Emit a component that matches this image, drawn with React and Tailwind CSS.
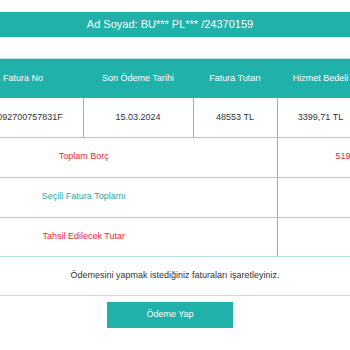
import React from 'react'

const teal = 'bg-[#20b2aa]'

export default function App() {
  const cols = [72, 120, 110, 84, 87, 80]

  return (
    <div className="w-[350px] h-[350px] overflow-hidden bg-white font-['Liberation_Sans',Arial,sans-serif] text-[9px] text-[#333]">
      {/* Title bar */}
      <div className="pt-3">
        <div className={`h-[25px] ${teal} flex items-center justify-center pr-[10px] text-white text-[11px]`}>
          Ad Soyad: BU*** PL*** /24370159
        </div>
      </div>

      {/* Invoice table */}
      <div className="mt-[21px] border-t border-[#b5e4e0] overflow-hidden">
        <table className="ml-[-109px] w-[553px] table-fixed border-collapse">
          <colgroup>
            {cols.map((w, i) => (
              <col key={i} style={{ width: w }} />
            ))}
          </colgroup>
          <thead>
            <tr className={`${teal} h-[39px] text-white`}>
              <th className="font-normal"></th>
              <th className="font-normal">Fatura No</th>
              <th className="font-normal">Son Ödeme Tarihi</th>
              <th className="font-normal">Fatura Tutarı</th>
              <th className="font-normal">Hizmet Bedeli</th>
              <th className="font-normal">Toplam</th>
            </tr>
          </thead>
          <tbody>
            <tr className="h-[39px] border-b border-[#8fd2cc] text-center">
              <td className="border-r border-[#6fc5bd]"></td>
              <td className="border-r border-[#6fc5bd] pl-[14px]">092700757831F</td>
              <td className="border-r border-[#6fc5bd]">15.03.2024</td>
              <td className="border-r border-[#6fc5bd]">48553 TL</td>
              <td className="border-r border-[#6fc5bd]">3399,71 TL</td>
              <td></td>
            </tr>
            <tr className="h-[40px] border-b border-[#8fd2cc] text-center">
              <td colSpan={4} className="border-r border-[#6fc5bd] text-[#e52b35]">Toplam Borç</td>
              <td colSpan={2} className="text-[#e52b35]">51952,71 TL</td>
            </tr>
            <tr className="h-[40px] border-b border-[#8fd2cc] text-center">
              <td colSpan={4} className="border-r border-[#6fc5bd] text-[#2ea79f]">Seçili Fatura Toplamı</td>
              <td colSpan={2}></td>
            </tr>
            <tr className="h-[39px] border-b border-[#b5e4e0] text-center">
              <td colSpan={4} className="border-r border-[#6fc5bd] text-[#e52b35]">Tahsil Edilecek Tutar</td>
              <td colSpan={2}></td>
            </tr>
          </tbody>
        </table>
      </div>

      {/* Message */}
      <div className="h-[39px] border-b border-[#b5e4e0] flex items-center justify-center">
        Ödemesini yapmak istediğiniz faturaları işaretleyiniz.
      </div>

      {/* Pay button */}
      <div className="pt-[6px] pl-[107px]">
        <button className={`w-[126px] h-[26px] ${teal} text-white text-[9px]`}>Ödeme Yap</button>
      </div>
    </div>
  )
}
